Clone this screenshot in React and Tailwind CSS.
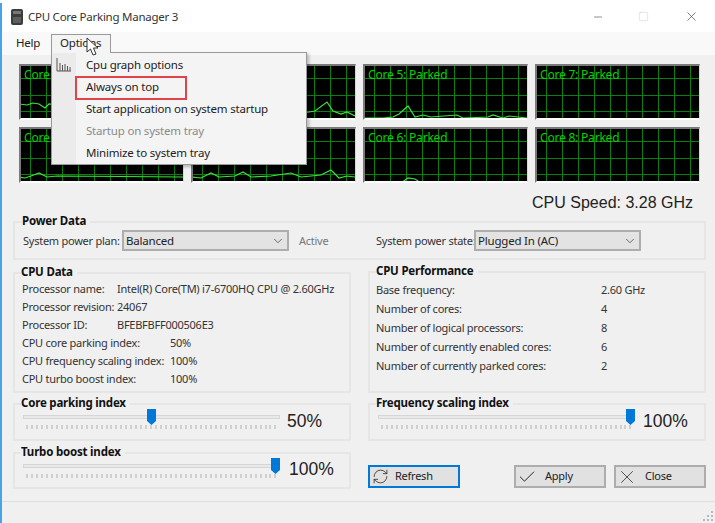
import { ChevronDown, Check, X, RefreshCw, Minus, Square } from 'lucide-react';

const FONT = "font-['Noto_Sans',sans-serif]";

const traces = {
  1: '0,40 8,41 14,39 20,40 26,44 30,40 38,41 60,40 90,42 164,42',
  2: '0,50 6,51 12,49 20,46 28,50 38,49 164,50',
  3: '0,49 30,50 60,48 100,50 112,49 124,47 136,38 142,47 150,50 156,48 164,52',
  4: '0,50 10,51 20,46 28,50 44,49 52,45 60,50 80,49 100,46 110,50 130,48 140,43 148,51 156,49 164,50',
  5: '0,54 20,54 30,53 36,50 45,42 52,53 60,51 68,53 94,51 100,54 125,53 130,51 140,54 146,52 164,54',
  6: '0,56 38,56 45,51 52,52 58,56 164,56',
  7: '0,56 164,56',
  8: '0,56 164,56',
};

const Graph = ({ core, label }) => {
  return (
    <div className="relative h-[56px] w-[165px] border-t-2 border-l-2 border-[#7a7a7a] border-r border-r-[#d8d8d8] border-b-2 border-b-white bg-black">
      <svg width="162" height="52" className="absolute left-0 top-0">
        {[9, 25, 41, 57, 73, 89, 105, 121, 137, 153].map((x) => (
          <line key={x} x1={x + 0.5} y1="0" x2={x + 0.5} y2="52" stroke="#0b7f0b" />
        ))}
        {[12.5, 29.5, 45.5].map((y) => (
          <line key={y} x1="0" y1={y} x2="162" y2={y} stroke="#0b7f0b" />
        ))}
        <polyline points={traces[core]} fill="none" stroke="#3fe03f" strokeWidth="1.2" transform="translate(-2 -2)" />
      </svg>
      <span className={`absolute left-[3px] top-[1px] whitespace-nowrap text-[12px] leading-[16px] tracking-[-0.2px] text-[#00d400] ${FONT}`}>{label}</span>
    </div>
  );
};

const GroupBox = ({ title, className, children, titleClass = '' }) => {
  return (
    <div className={`border-2 border-[#e6e6e6] ${className}`}>
      <div className={`-mt-[10px] ml-[6px] w-fit whitespace-nowrap bg-[#f0f0f0] pr-1 text-[11.5px] font-bold leading-[16px] tracking-[-0.2px] text-[#111] ${titleClass}`}>{title}</div>
      {children}
    </div>
  );
};

const Select = ({ value, className }) => {
  return (
    <div className={`flex h-[21px] items-center justify-between border-2 border-[#adadad] bg-[#e3e3e3] pl-[2px] pr-[2px] text-[11.5px] tracking-[-0.2px] text-[#222] ${className}`}>
      <span className="whitespace-nowrap">{value}</span>
      <ChevronDown size={14} strokeWidth={1.5} className="text-[#555]" />
    </div>
  );
};

const Ticks = () => {
  const ticks = [];
  for (let i = 0; i < 51; i++) ticks.push(i);
  return (
    <div className="flex justify-between">
      {ticks.map((t) => (
        <div key={t} className="h-[4px] w-[2px] bg-[#cfcfcf]" />
      ))}
    </div>
  );
};

const Slider = ({ pos, value, valueClass }) => {
  return (
    <div className="flex items-start">
      <div className="relative ml-[8px] mt-[4px] w-[257px]">
        <div className="h-[4px] w-full border border-[#d6d6d6] bg-[#e7eaea]" />
        <div className="mx-[3px] mt-[6px]"><Ticks /></div>
        <svg width="9" height="16" className="absolute top-[-6px]" style={{ left: pos }}>
          <path d="M0 0H9V12L4.5 16L0 12Z" fill="#0078d7" />
        </svg>
      </div>
      <span className={`text-[#222] ${valueClass}`}>{value}</span>
    </div>
  );
};

const Row = ({ label, value, labelWidth, className = '' }) => {
  return (
    <div className={`flex h-[18px] items-center whitespace-nowrap text-[11px] tracking-[-0.25px] text-[#333] ${className}`}>
      <span style={{ width: labelWidth }} className="shrink-0">{label}</span>
      <span>{value}</span>
    </div>
  );
};

const BtnShell = ({ children, className = '' }) => {
  return (
    <div className={`relative flex h-[23px] w-[92px] items-center border-2 bg-[#e1e1e1] text-[11px] tracking-[-0.25px] text-[#222] ${className}`}>
      {children}
    </div>
  );
};

const MenuItem = ({ children, disabled }) => {
  return (
    <div className={`flex h-[22px] items-center pl-[34px] text-[11.5px] tracking-[-0.2px] ${disabled ? 'text-[#8a8a8a]' : 'text-[#222]'}`}>
      {children}
    </div>
  );
};

export default function App() {
  return (
    <div className={`relative h-[523px] w-[715px] overflow-hidden bg-white ${FONT}`}>
      <div className="h-[3px] bg-white" />
      <div className="flex h-[520px] flex-col border-l-2 border-l-[#4aa3e8]">
        {/* title bar */}
        <div className="flex h-[29px] shrink-0 items-center bg-white pb-[2px] pl-[8px]">
          <svg width="14" height="16" viewBox="0 0 14 16">
            <rect x="1" y="0" width="12" height="16" rx="2" fill="#3c3c3c" />
            <rect x="3" y="2" width="8" height="3" fill="#777" />
            <rect x="3" y="8" width="8" height="6" fill="#5e5e5e" />
          </svg>
          <span className="ml-[4px] text-[11.5px] tracking-[-0.25px] text-[#333]">CPU Core Parking Manager 3</span>
          <div className="ml-auto mr-[16px] flex items-center">
            <Minus size={12} strokeWidth={1.2} className="mr-[34px] text-[#444]" />
            <Square size={11} strokeWidth={1} className="mr-[35px] text-[#c8c8c8]" />
            <X size={15} strokeWidth={1.1} className="text-[#444]" />
          </div>
        </div>
        {/* menu bar */}
        <div className="flex h-[23px] shrink-0 items-center bg-[#f9f9f9] pb-[2px] text-[11.5px] tracking-[-0.2px] text-[#222]">
          <span className="ml-[14px]">Help</span>
        </div>
        {/* body */}
        <div className="flex min-h-0 flex-1 flex-col bg-[#f0f0f0]">
          <div className="ml-[17px] mt-[9px] grid w-fit grid-cols-[165px_165px_165px_165px] gap-x-[7px] gap-y-[7px]">
            <Graph core={1} label="Core 1: 50%" />
            <Graph core={3} label="Core 3: 50%" />
            <Graph core={5} label="Core 5: Parked" />
            <Graph core={7} label="Core 7: Parked" />
            <Graph core={2} label="Core 2: 50%" />
            <Graph core={4} label="Core 4: 50%" />
            <Graph core={6} label="Core 6: Parked" />
            <Graph core={8} label="Core 8: Parked" />
          </div>
          <div className="mr-[22px] mt-[9px] h-[22px] text-right font-['Liberation_Sans',sans-serif] text-[16px] leading-[22px] text-[#222]">CPU Speed: 3.28 GHz</div>
          <div className="ml-[11px] mt-[7px] w-[693px]">
            <GroupBox title="Power Data" className="h-[39px]" titleClass="ml-[7px]">
              <div className="mt-[1px] flex items-center whitespace-nowrap text-[11px] leading-[21px] tracking-[-0.25px] text-[#333]">
                <span className="ml-[8px] w-[99px]">System power plan:</span>
                <Select value="Balanced" className="w-[167px]" />
                <span className="ml-[10px] w-[77px] text-[#777]">Active</span>
                <span className="w-[98px]">System power state:</span>
                <Select value="Plugged In (AC)" className="w-[167px]" />
              </div>
            </GroupBox>
            <div className="mt-[12px] flex gap-[17px]">
              <GroupBox title="CPU Data" className="h-[121px] w-[338px]">
                <div className="ml-[7px]">
                  <Row label="Processor name:" value="Intel(R) Core(TM) i7-6700HQ CPU @ 2.60GHz" labelWidth={95} />
                  <Row label="Processor revision:" value="24067" labelWidth={95} />
                  <Row label="Processor ID:" value="BFEBFBFF000506E3" labelWidth={95} />
                  <Row label="CPU core parking index:" value="50%" labelWidth={148} />
                  <Row label="CPU frequency scaling index:" value="100%" labelWidth={148} />
                  <Row label="CPU turbo boost index:" value="100%" labelWidth={148} />
                </div>
              </GroupBox>
              <GroupBox title="CPU Performance" className="-mt-px h-[122px] w-[338px]">
                <div className="ml-[6px] mt-[2px]">
                  <Row label="Base frequency:" value="2.60 GHz" labelWidth={225} className="h-[19px]" />
                  <Row label="Number of cores:" value="4" labelWidth={225} className="h-[19px]" />
                  <Row label="Number of logical processors:" value="8" labelWidth={225} className="h-[19px]" />
                  <Row label="Number of currently enabled cores:" value="6" labelWidth={225} className="h-[19px]" />
                  <Row label="Number of currently parked cores:" value="2" labelWidth={225} className="h-[19px]" />
                </div>
              </GroupBox>
            </div>
            <div className="mt-[10px] flex gap-[17px]">
              <div className="w-[338px]">
                <GroupBox title="Core parking index" className="h-[38px]">
                  <Slider pos={124} value="50%" valueClass="ml-[7px] -mt-px font-['Liberation_Sans',sans-serif] text-[17.5px] leading-[22px]" />
                </GroupBox>
                <GroupBox title="Turbo boost index" className="mt-[11px] h-[37px]">
                  <Slider pos={248} value="100%" valueClass="ml-[9px] -mt-[2px] font-['Liberation_Sans',sans-serif] text-[17.5px] leading-[22px]" />
                </GroupBox>
              </div>
              <div className="w-[338px]">
                <GroupBox title="Frequency scaling index" className="h-[38px]">
                  <Slider pos={248} value="100%" valueClass="ml-[8px] -mt-px font-['Liberation_Sans',sans-serif] text-[17.5px] leading-[22px]" />
                </GroupBox>
                <div className="mt-[24px] flex">
                  <BtnShell className="border-[#0078d7]">
                    <RefreshCw size={17} strokeWidth={1.2} className="ml-[2px] text-[#333]" />
                    <span className="ml-[6px]">Refresh</span>
                  </BtnShell>
                  <BtnShell className="ml-[54px] border-[#adadad]">
                    <Check size={20} strokeWidth={1.2} className="ml-[1px] text-[#222]" />
                    <span className="ml-[8px]">Apply</span>
                  </BtnShell>
                  <BtnShell className="ml-[8px] border-[#adadad]">
                    <X size={22} strokeWidth={0.9} className="text-[#333]" />
                    <span className="ml-[7px]">Close</span>
                  </BtnShell>
                </div>
              </div>
            </div>
          </div>
          <div className="mt-auto h-[22px] border-t border-[#dedede] bg-[#f0f0f0]">
            <svg width="11" height="11" className="absolute bottom-[1px] right-[1px]">
              {[[8, 0], [4, 4], [8, 4], [0, 8], [4, 8], [8, 8]].map(([x, y]) => (
                <rect key={`${x}-${y}`} x={x} y={y} width="2" height="2" fill="#b8b8b8" />
              ))}
            </svg>
          </div>
        </div>
      </div>

      {/* open Options menu, sits over the graphs */}
      <div className="absolute left-[51px] top-[34px] z-10 flex h-[19px] w-[60px] items-center border border-b-0 border-[#9a9a9a] bg-[#f4f4f4] pb-[2px] pl-[8px] text-[11.5px] tracking-[-0.2px] text-[#222]">
        Options
      </div>
      <div className="absolute left-[51px] top-[52px] h-[113px] w-[256px] border border-[#9a9a9a] bg-[#f4f4f4] py-[1px] shadow-[2px_2px_3px_rgba(0,0,0,0.25)]">
        <div className="absolute bottom-0 left-0 top-0 w-[24px] bg-[#ebebeb]" />
        <svg width="16" height="14" viewBox="0 0 16 14" className="absolute left-[4px] top-[5px]">
          <path d="M1 0V13H15M4 5V13M6.5 7V13M9 6V13M11.500 8V13M14 9V13" fill="none" stroke="#555" />
        </svg>
        <div className="relative">
          <MenuItem>Cpu graph options</MenuItem>
          <MenuItem>Always on top</MenuItem>
          <MenuItem>Start application on system startup</MenuItem>
          <MenuItem disabled>Startup on system tray</MenuItem>
          <MenuItem>Minimize to system tray</MenuItem>
        </div>
      </div>
      <div className="absolute left-[75px] top-[76px] h-[24px] w-[112px] border-2 border-[#e0434a]" />
      <svg width="15" height="20" viewBox="0 0 15 20" className="absolute left-[86px] top-[37px] z-20">
        <path d="M1 1V15L4.500 12L7 18L10 17L7.500 11H12Z" fill="#fff" stroke="#333" strokeWidth="1" />
      </svg>
    </div>
  );
}
